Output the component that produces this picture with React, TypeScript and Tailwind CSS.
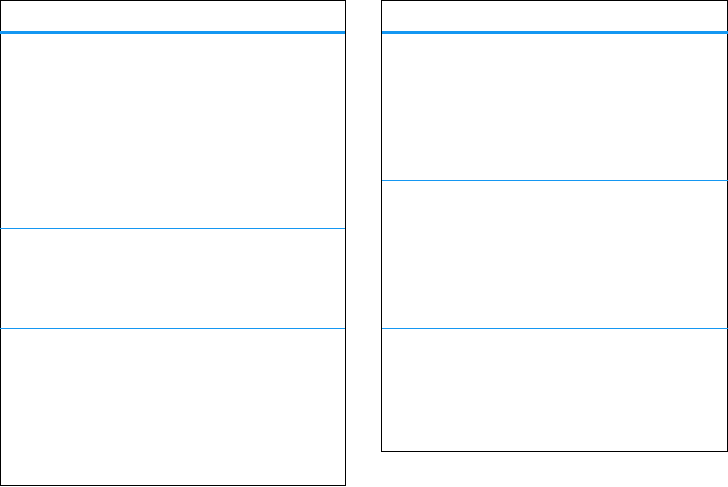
export default function App() {
  return (
    <div className="flex w-[728px] h-[487px] bg-white items-start gap-[35px] overflow-hidden">
      <div className="w-[346px] h-[486px] border border-black flex flex-col">
        <div className="h-[30px]" />
        <div className="h-[3px] bg-[#1497f2] -ml-px" />
        <div className="h-[194px]" />
        <div className="h-px bg-[#1497f2] -ml-px" />
        <div className="h-[99px]" />
        <div className="h-px bg-[#1497f2] -ml-px" />
        <div className="flex-1" />
      </div>
      <div className="w-[347px] h-[452px] border border-black flex flex-col">
        <div className="h-[30px]" />
        <div className="h-[3px] bg-[#1497f2] -mr-px" />
        <div className="h-[146px]" />
        <div className="h-px bg-[#1497f2] -mr-px" />
        <div className="h-[147px]" />
        <div className="h-px bg-[#1497f2] -mr-px" />
        <div className="flex-1" />
      </div>
    </div>
  );
}
